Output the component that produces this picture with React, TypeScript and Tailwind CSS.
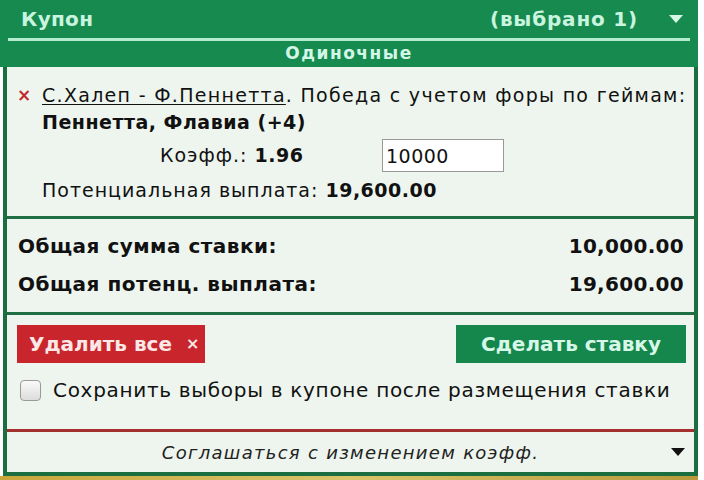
function Caret({ className = "" }: { className?: string }) {
	return (
		<svg width="16" height="10" viewBox="0 0 16 10" className={className}>
			<path d="M1 1 L15 1 L8 9 Z" fill="currentColor" />
		</svg>
	);
}

export default function App() {
	return (
		<div className="w-[704px] h-[480px] overflow-hidden bg-white font-['DejaVu_Sans','Liberation_Sans',sans-serif]">
			<div className="w-[698px] flex flex-col">
				{/* header */}
				<div className="bg-[#168a4f] text-[#c9f4df] font-bold">
					<div className="h-[38px] flex items-center pl-[21px] pr-[14px] text-[20px]">
						<span className="tracking-[0.3px]">Купон</span>
						<span className="ml-auto tracking-[0.8px]">(выбрано 1)</span>
						<Caret className="ml-[30px] text-[#d8f7e8]" />
					</div>
					<div className="mx-[8px] h-[3px] bg-[#b5ecd0]" />
					<div className="h-[26px] flex items-center justify-center text-[17px] text-[#d4f6e6] tracking-[1.5px]">
						Одиночные
					</div>
				</div>

				<div className="ml-[3px] border-x-[4px] border-[#1a6e40] bg-[#eef5ee] text-[#111]">
					{/* selection */}
					<div className="pt-[15px] pb-[12px] pl-[10px] pr-[2px] text-[19px] leading-[27px] tracking-[1px]">
						<div className="flex items-start whitespace-nowrap tracking-[1.3px]">
							<span className="w-[25px] text-[#c0272d] font-bold text-[17px]">×</span>
							<span>
								<span className="underline underline-offset-2">С.Халеп - Ф.Пеннетта</span>. Победа с учетом форы по геймам:
							</span>
						</div>
						<div className="pl-[25px] font-bold tracking-[0.5px]">Пеннетта, Флавиа (+4)</div>
						<div className="flex items-center mt-[3px] pl-[143px]">
							<span className="w-[222px]">
								Коэфф.: <b className="tracking-[0.5px]">1.96</b>
							</span>
							<input
								readOnly
								value="10000"
								className="w-[122px] h-[33px] bg-white border border-[#999] px-[3px] text-[19px] tracking-[0.5px] text-[#111] outline-none"
							/>
						</div>
						<div className="pl-[25px] mt-[5px]">
							Потенциальная выплата: <b className="tracking-[0.5px]">19,600.00</b>
						</div>
					</div>

					<div className="h-[3px] bg-[#1f6f43]" />

					{/* totals */}
					<div className="pl-[11px] pr-[10px] pt-[14px] pb-[15px] text-[20px] font-bold leading-[26px] flex flex-col gap-[12px]">
						<div className="flex justify-between">
							<span className="tracking-[0.5px]">Общая сумма ставки:</span>
							<span className="tracking-[0.3px]">10,000.00</span>
						</div>
						<div className="flex justify-between">
							<span className="tracking-[0.5px]">Общая потенц. выплата:</span>
							<span className="tracking-[0.3px]">19,600.00</span>
						</div>
					</div>

					<div className="h-[3px] bg-[#1f6f43]" />

					{/* actions */}
					<div className="pl-[10px] pr-[8px] pt-[10px] pb-[24px]">
						<div className="flex justify-between">
							<button className="h-[38px] w-[188px] pl-[12px] bg-[#c8262c] text-[#fde8e8] font-bold text-[20px] flex items-center gap-[14px]">
								Удалить все
								<span className="text-[16px]">×</span>
							</button>
							<button className="h-[38px] w-[230px] bg-[#15874c] text-[#d7f7e8] font-bold text-[20px] flex items-center justify-center">
								Сделать ставку
							</button>
						</div>
						<div className="flex items-center mt-[12px] text-[20px] tracking-[0.7px]">
							<span className="w-[21px] h-[21px] rounded-[4px] border border-[#9a9a9a] bg-gradient-to-b from-[#fafafa] to-[#dcdcdc] ml-[3px]" />
							<span className="ml-[12px] whitespace-nowrap">Сохранить выборы в купоне после размещения ставки</span>
						</div>
					</div>

					<div className="h-[3px] bg-[#a3302f]" />

					<div className="h-[40px] flex items-center pl-[14px] pr-[8px] text-[18px] italic text-[#222] tracking-[1.3px]">
						<span className="flex-1 text-center pl-[10px]">Соглашаться с изменением коэфф.</span>
						<Caret className="text-[#111]" />
					</div>
				</div>
				<div className="ml-[3px] h-[4px] bg-[#1a6e40]" />
				<div className="h-[20px] bg-gradient-to-r from-[#c9a63a] via-[#d9c46a] to-[#b89a3a]" />
			</div>
		</div>
	);
}
